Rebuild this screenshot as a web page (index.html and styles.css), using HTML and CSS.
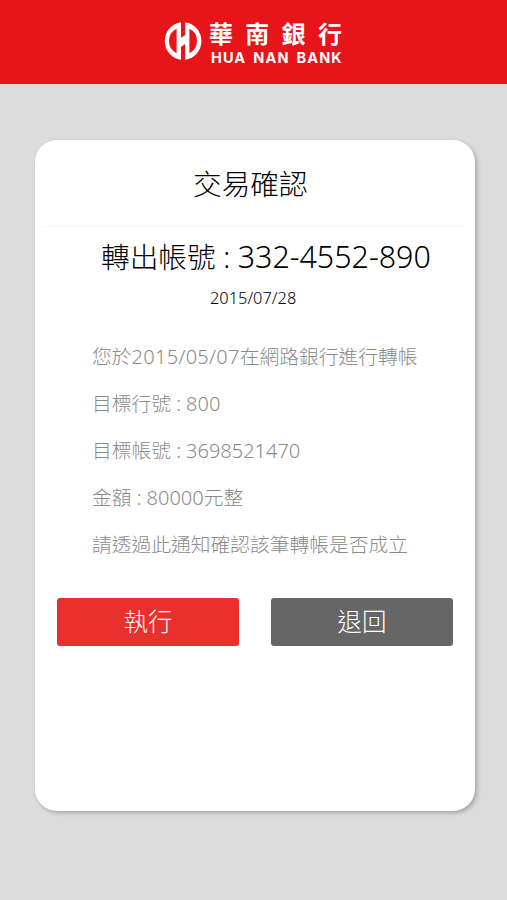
FILE: index.html
```
<!DOCTYPE html>
<html lang="zh-Hant">
<head>
<meta charset="utf-8">
<meta name="viewport" content="width=device-width">
<title>華南銀行 - 交易確認</title>
<link rel="stylesheet" href="styles.css">
</head>
<body>
<header class="topbar">
  <svg class="logo-mark" viewBox="0 0 38 38">
    <!-- left half, right half, crossbar -->
    <path fill-rule="evenodd" d="M17 0.2 A19 19 0 0 0 17 37.8 Z M12.6 6.8 V31.2 A13.6 13.6 0 0 1 12.6 6.8 Z"/>
    <path fill-rule="evenodd" d="M21.2 0.2 A19 19 0 0 1 21.2 37.8 Z M25.4 6.8 V31.2 A13.6 13.6 0 0 0 25.4 6.8 Z"/>
    <path d="M16 16.5 L22 12.5 V21.5 L16 25.5 Z"/>
  </svg>
  <div class="logo-text">
    <div class="logo-zh">華南銀行</div>
    <div class="logo-en">HUA NAN BANK</div>
  </div>
</header>
<main class="card">
  <h1 class="title">交易確認</h1>
  <h2 class="account">轉出帳號 : <span class="account-no">332-4552-890</span></h2>
  <p class="date">2015/07/28</p>
  <div class="detail">
    <p>您於<span class="num day">2015/05/07</span>在網路銀行進行轉帳</p>
    <p>目標行號 : <span class="num">800</span></p>
    <p>目標帳號 : <span class="num">3698521470</span></p>
    <p>金額 : <span class="num">80000</span>元整</p>
    <p>請透過此通知確認該筆轉帳是否成立</p>
  </div>
  <div class="buttons">
    <button class="btn confirm">執行</button>
    <button class="btn cancel">退回</button>
  </div>
</main>
</body>
</html>
```
FILE: styles.css
```
* { box-sizing: border-box; }
body {
  margin: 0;
  min-height: 900px;
  background-color: #dcdcdc;
  font-family: "Noto Sans", "Noto Sans CJK TC", sans-serif;
  font-weight: 300;
}
h1, h2, p { margin: 0; font-weight: 300; }

.topbar {
  display: flex;
  height: 84px;
  padding: 22px 0 0 164px;
  background-color: #e71419;
  color: #fff;
}
.logo-mark { width: 38px; height: 38px; fill: #fff; }
.logo-text { margin: 0 0 0 7px; white-space: nowrap; }
.logo-zh {
  font: 700 24px/22px "Noto Sans CJK TC", sans-serif;
  letter-spacing: 12.3px;
}
.logo-en {
  margin: 5px 0 0 2px;
  font: 700 14.5px/18px Inter, sans-serif;
  letter-spacing: 1.1px;
  word-spacing: 2.5px;
}

.card {
  width: 440px;
  height: 671px;
  margin: 56px 0 0 35px;
  padding: 0 9px;
  background-color: #fff;
  border-radius: 22px;
  box-shadow: 2px 2px 4px rgba(0,0,0,0.25);
}
.title {
  height: 87px;
  padding-left: 149px;
  border-bottom: 1px solid #f7f7f7;
  font-size: 28.7px;
  line-height: 88px;
}
.account {
  padding-left: 57px;
  font-size: 28.7px;
  line-height: 60px;
  white-space: nowrap;
}
.account-no { font-size: 30.4px; font-weight: 350; }
.date {
  padding-left: 166px;
  font-size: 16.4px;
  font-weight: 350;
  line-height: 22px;
}
.detail {
  margin-top: 24px;
  padding-left: 48px;
  color: #8a8a8a;
  font-size: 19.75px;
  line-height: 47px;
  white-space: nowrap;
}
.detail .num { font-size: 20px; font-weight: 350; }
.detail .day { letter-spacing: 0.3px; }
.buttons {
  display: flex;
  gap: 32px;
  margin-top: 30px;
  padding: 0 13px;
}
.btn {
  width: 182px;
  height: 48px;
  padding: 0 0 4px;
  border: 0;
  border-radius: 3px;
  color: #fff;
  font: inherit;
  font-size: 24.5px;
}
.confirm { background-color: #e8312c; }
.cancel { background-color: #666; }
```
